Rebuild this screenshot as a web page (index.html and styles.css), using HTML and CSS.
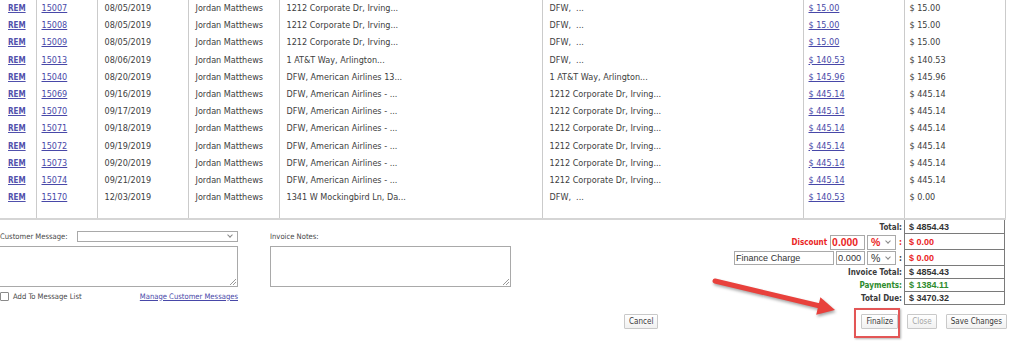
FILE: index.html
```html
<!DOCTYPE html>
<html>
<head>
<meta charset="utf-8">
<link rel="stylesheet" href="styles.css">
</head>
<body>
<div class="page">
  <table class="grid">
    <colgroup>
      <col class="w1"><col class="w2"><col class="w3"><col class="w4"><col class="w5"><col class="w6"><col class="w7"><col class="w8">
    </colgroup>
    <tbody>
      <tr><td><a class="rem">REM</a></td><td class="num"><a>15007</a></td><td>08/05/2019</td><td>Jordan Matthews</td><td>1212 Corporate Dr, Irving...</td><td>DFW,&nbsp; ...</td><td class="amt"><a>$ 15.00</a></td><td class="amt">$ 15.00</td></tr>
      <tr><td><a class="rem">REM</a></td><td class="num"><a>15008</a></td><td>08/05/2019</td><td>Jordan Matthews</td><td>1212 Corporate Dr, Irving...</td><td>DFW,&nbsp; ...</td><td class="amt"><a>$ 15.00</a></td><td class="amt">$ 15.00</td></tr>
      <tr><td><a class="rem">REM</a></td><td class="num"><a>15009</a></td><td>08/05/2019</td><td>Jordan Matthews</td><td>1212 Corporate Dr, Irving...</td><td>DFW,&nbsp; ...</td><td class="amt"><a>$ 15.00</a></td><td class="amt">$ 15.00</td></tr>
      <tr><td><a class="rem">REM</a></td><td class="num"><a>15013</a></td><td>08/06/2019</td><td>Jordan Matthews</td><td>1 AT&amp;T Way, Arlington...</td><td>DFW,&nbsp; ...</td><td class="amt"><a>$ 140.53</a></td><td class="amt">$ 140.53</td></tr>
      <tr><td><a class="rem">REM</a></td><td class="num"><a>15040</a></td><td>08/20/2019</td><td>Jordan Matthews</td><td>DFW, American Airlines 13...</td><td>1 AT&amp;T Way, Arlington...</td><td class="amt"><a>$ 145.96</a></td><td class="amt">$ 145.96</td></tr>
      <tr><td><a class="rem">REM</a></td><td class="num"><a>15069</a></td><td>09/16/2019</td><td>Jordan Matthews</td><td>DFW, American Airlines - ...</td><td>1212 Corporate Dr, Irving...</td><td class="amt"><a>$ 445.14</a></td><td class="amt">$ 445.14</td></tr>
      <tr><td><a class="rem">REM</a></td><td class="num"><a>15070</a></td><td>09/17/2019</td><td>Jordan Matthews</td><td>DFW, American Airlines - ...</td><td>1212 Corporate Dr, Irving...</td><td class="amt"><a>$ 445.14</a></td><td class="amt">$ 445.14</td></tr>
      <tr><td><a class="rem">REM</a></td><td class="num"><a>15071</a></td><td>09/18/2019</td><td>Jordan Matthews</td><td>DFW, American Airlines - ...</td><td>1212 Corporate Dr, Irving...</td><td class="amt"><a>$ 445.14</a></td><td class="amt">$ 445.14</td></tr>
      <tr><td><a class="rem">REM</a></td><td class="num"><a>15072</a></td><td>09/19/2019</td><td>Jordan Matthews</td><td>DFW, American Airlines - ...</td><td>1212 Corporate Dr, Irving...</td><td class="amt"><a>$ 445.14</a></td><td class="amt">$ 445.14</td></tr>
      <tr><td><a class="rem">REM</a></td><td class="num"><a>15073</a></td><td>09/20/2019</td><td>Jordan Matthews</td><td>DFW, American Airlines - ...</td><td>1212 Corporate Dr, Irving...</td><td class="amt"><a>$ 445.14</a></td><td class="amt">$ 445.14</td></tr>
      <tr><td><a class="rem">REM</a></td><td class="num"><a>15074</a></td><td>09/21/2019</td><td>Jordan Matthews</td><td>DFW, American Airlines - ...</td><td>1212 Corporate Dr, Irving...</td><td class="amt"><a>$ 445.14</a></td><td class="amt">$ 445.14</td></tr>
      <tr><td><a class="rem">REM</a></td><td class="num"><a>15170</a></td><td>12/03/2019</td><td>Jordan Matthews</td><td>1341 W Mockingbird Ln, Da...</td><td>DFW,&nbsp; ...</td><td class="amt"><a>$ 140.53</a></td><td class="amt">$ 0.00</td></tr>
      <tr class="filler"><td></td><td></td><td></td><td></td><td></td><td></td><td></td><td></td></tr>
    </tbody>
  </table>

  <div class="lower">
    <div class="msg">
      <div class="msg-head">
        <span class="lbl">Customer Message:</span>
        <span class="select wide"><span class="chev"></span></span>
      </div>
      <div class="textarea"><span class="grip"></span></div>
      <div class="msg-foot">
        <label class="check"><span class="box"></span>Add To Message List</label>
        <a class="manage">Manage Customer Messages</a>
      </div>
    </div>

    <div class="notes">
      <div class="lbl notes-lbl">Invoice Notes:</div>
      <div class="textarea"><span class="grip"></span></div>
    </div>

    <div class="totals">
      <div class="t-lbl r1">Total:</div>
      <div class="t-val r1">$ 4854.43</div>

      <div class="t-lbl r2 red"><span class="disc-lbl">Discount</span><span class="inp disc">0.000</span><span class="select pct red-sel">%<span class="chev"></span></span><span class="colon">:</span></div>
      <div class="t-val r2 red">$ 0.00</div>

      <div class="t-lbl r3"><span class="inp fin">Finance Charge</span><span class="inp fin-num">0.000</span><span class="select pct">%<span class="chev"></span></span><span class="colon">:</span></div>
      <div class="t-val r3 red">$ 0.00</div>

      <div class="t-lbl r4">Invoice Total:</div>
      <div class="t-val r4">$ 4854.43</div>

      <div class="t-lbl r5 green">Payments:</div>
      <div class="t-val r5 green">$ 1384.11</div>

      <div class="t-lbl r6">Total Due:</div>
      <div class="t-val r6">$ 3470.32</div>
    </div>
  </div>

  <div class="actions">
    <button class="btn cancel">Cancel</button>
    <span class="hl"><button class="btn">Finalize</button></span>
    <button class="btn disabled">Close</button>
    <button class="btn">Save Changes</button>
  </div>

  <svg class="arrow" width="150" height="50" viewBox="0 0 150 50">
    <line x1="15" y1="11" x2="120" y2="36" stroke="#e8413c" stroke-width="5" stroke-linecap="round"/>
    <polygon points="135,40 116.2,44.8 120.4,27.2" fill="#e8413c"/>
  </svg>
</div>
</body>
</html>
```

FILE: styles.css
```css
* { box-sizing: border-box; }

body {
  margin: 0;
  background: #fff;
  color: #404040;
  font-family: "DejaVu Sans Condensed", "DejaVu Sans", sans-serif;
  font-stretch: condensed;
  font-size: 9px;
}

.page {
  position: relative;
  width: 1024px;
  height: 344px;
  overflow: hidden;
}

a {
  color: #4848a8;
  text-decoration: underline;
}

/* ---------- main grid ---------- */
.grid {
  border-collapse: collapse;
  table-layout: fixed;
  width: 1005px;
}
.w1 { width: 36px; }
.w2 { width: 61px; }
.w3 { width: 91px; }
.w4 { width: 91px; }
.w5 { width: 263px; }
.w6 { width: 261px; }
.w7 { width: 101px; }
.w8 { width: 101px; }

.grid td {
  height: 17.2px;
  padding: 0 0 0 7px;
  border-left: 1px solid #cbcbcb;
  white-space: nowrap;
  overflow: hidden;
  line-height: 11px;
  vertical-align: middle;
}
.grid td:first-child { border-left: none; padding-left: 8px; }
.grid td:last-child { border-right: 1px solid #cbcbcb; }
.grid td.num { padding-left: 5px; }
.grid td.amt { padding-left: 5px; }

.rem {
  font-size: 8px;
  font-weight: bold;
  color: #5050ac;
}

.grid .filler td {
  height: 13px;
  border-bottom: 2px solid #d5d5d5;
}

/* ---------- lower area ---------- */
.lower {
  display: flex;
  align-items: flex-start;
  width: 1005px;
}

.lbl {
  font-size: 7.6px;
  color: #484848;
}

.msg {
  width: 239px;
  margin-left: -1px;
  padding-top: 10px;
}
.msg-head {
  display: flex;
  align-items: center;
  justify-content: space-between;
  height: 12px;
  padding-left: 1px;
}

.select {
  position: relative;
  display: inline-flex;
  align-items: center;
  border: 1px solid #a9a9a9;
  background: #fff;
}
.select.wide {
  width: 161px;
  height: 11px;
}
.chev {
  position: absolute;
  right: 5px;
  top: 50%;
  width: 4px;
  height: 4px;
  margin-top: -3px;
  border-right: 1px solid #888;
  border-bottom: 1px solid #888;
  transform: rotate(45deg);
}

.textarea {
  position: relative;
  height: 41px;
  margin-top: 4px;
  border: 1px solid #a9a9a9;
  background: #fff;
}
.grip {
  position: absolute;
  right: 1px;
  bottom: 1px;
  width: 6px;
  height: 6px;
  background:
    linear-gradient(135deg, transparent 45%, #999 45%, #999 55%, transparent 55%, transparent 72%, #999 72%, #999 82%, transparent 82%);
}

.msg-foot {
  display: flex;
  align-items: center;
  justify-content: space-between;
  margin-top: 5px;
  padding-left: 1px;
}
.check {
  display: flex;
  align-items: center;
  gap: 4px;
  font-size: 7.6px;
  color: #484848;
}
.box {
  width: 9px;
  height: 9px;
  border: 1px solid #8a8a8a;
  border-radius: 1px;
  background: #fff;
}
.manage {
  font-size: 7.6px;
  margin-top: -1px;
}

.notes {
  width: 241px;
  margin-left: 32px;
  padding-top: 12px;
}
.notes-lbl { height: 10px; line-height: 10px; }

/* ---------- totals ---------- */
.totals {
  margin-left: auto;
  display: grid;
  grid-template-columns: auto 101px;
  grid-template-rows: 14px 16px 16px 13px 13px 13px;
}
.t-lbl {
  display: flex;
  justify-content: flex-end;
  align-items: center;
  gap: 2px;
  padding-right: 2px;
  font-weight: bold;
  font-size: 8px;
  color: #3a3a3a;
}
.t-val {
  display: flex;
  align-items: center;
  padding-left: 4px;
  border-left: 1px solid #7a7a7a;
  border-right: 1px solid #7a7a7a;
  border-bottom: 1px solid #7a7a7a;
  font-family: "Liberation Sans", Arial, sans-serif;
  font-weight: bold;
  font-size: 9px;
  color: #333;
}
.red { color: #ea2424; }
.t-val.red { color: #ea2424; }
.green { color: #2e8b2e; }
.t-val.green { color: #2e8b2e; }

.disc-lbl { margin-right: 1px; }

.inp {
  display: inline-flex;
  align-items: center;
  border: 1px solid #a9a9a9;
  background: #fff;
  font-family: "Liberation Sans", Arial, sans-serif;
  font-weight: normal;
  color: #333;
  padding-left: 1px;
}
.inp.disc {
  width: 35px;
  height: 15px;
  font-size: 10.4px;
  font-weight: bold;
  color: #ea2424;
}
.inp.fin {
  width: 100px;
  height: 14px;
  font-size: 9px;
}
.inp.fin-num {
  width: 29px;
  height: 14px;
  font-size: 9.2px;
}
.select.pct {
  width: 29px;
  height: 14px;
  padding-left: 3px;
  font-family: "Liberation Sans", Arial, sans-serif;
  font-size: 10.5px;
  font-weight: normal;
  color: #333;
}
.select.pct.red-sel {
  height: 15px;
  font-weight: bold;
  color: #ea2424;
}
.colon {
  margin-left: 1px;
}

/* ---------- actions ---------- */
.actions {
  display: flex;
  align-items: center;
  gap: 9px;
  width: 1007px;
  margin-top: 9px;
}
.btn {
  height: 15px;
  padding: 0 4px;
  border: 1px solid #c9c9c9;
  border-radius: 1px;
  background: linear-gradient(#ffffff, #f1f1f1);
  font-family: "DejaVu Sans Condensed", "DejaVu Sans", sans-serif;
  font-stretch: condensed;
  font-size: 8px;
  color: #3a3a3a;
  line-height: 13px;
}
.btn.cancel {
  margin-left: 624px;
  margin-right: auto;
}
.btn.disabled { color: #a5a5a5; }

.hl {
  position: relative;
  display: inline-flex;
}
.hl::after {
  content: "";
  position: absolute;
  left: -7px;
  top: -6px;
  right: -2px;
  bottom: -9px;
  border: 2px solid #e35656;
  box-shadow: 1px 1px 2px rgba(0, 0, 0, 0.3);
}

.arrow {
  position: absolute;
  left: 700px;
  top: 270px;
  filter: drop-shadow(1px 2px 1.5px rgba(0, 0, 0, 0.35));
}
```
